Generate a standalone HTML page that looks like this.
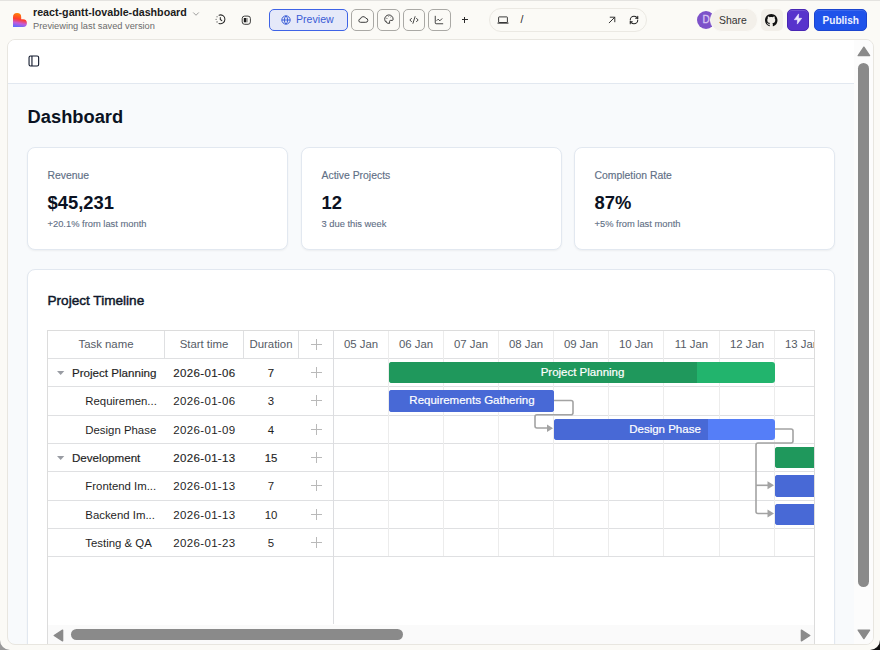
<!DOCTYPE html>
<html><head><meta charset="utf-8"><title>react-gantt-lovable-dashboard</title>
<style>
html,body{margin:0;padding:0;}
body{width:880px;height:650px;overflow:hidden;position:relative;background:#fbfaf6;font-family:"Liberation Sans", sans-serif;}
.t{position:absolute;white-space:nowrap;line-height:1;}
#panel{position:absolute;left:7px;top:39px;width:867px;height:606px;box-sizing:border-box;border:1px solid #e8e6e0;border-radius:8px;overflow:hidden;background:#f8fafc;}
</style></head><body>
<div style="position:absolute;left:0px;top:0px;width:880px;height:1px;background:#e4e3e0"></div><svg style="position:absolute;left:13px;top:13px" width="14" height="14" viewBox="0 0 14 14">
<defs><linearGradient id="lg" x1="0.55" y1="0" x2="0.35" y2="1">
<stop offset="0" stop-color="#ff8a00"/><stop offset="0.45" stop-color="#ff3d2e"/><stop offset="0.72" stop-color="#c65bd6"/><stop offset="1" stop-color="#5f6bff"/></linearGradient></defs>
<path d="M0 14V4.2a4.1 4.1 0 0 1 8.2 0V6.2H10a3.9 3.9 0 0 1 0 7.8Z" fill="url(#lg)"/></svg><div class="t" style="left:33.00px;top:6.74px;font-size:10.7px;color:#1c1c1c;font-weight:700;">react-gantt-lovable-dashboard</div><div class="t" style="left:33.00px;top:22.06px;font-size:9.26px;color:#6b6b6b;font-weight:400;">Previewing last saved version</div><svg style="position:absolute;left:191px;top:9px" width="10" height="10" viewBox="0 0 24 24" fill="none" stroke="#8a8a8a" stroke-width="2" stroke-linecap="round" stroke-linejoin="round"><path d="m6 9 6 6 6-6"/></svg><svg style="position:absolute;left:215px;top:14px" width="11" height="11" viewBox="0 0 11 11" fill="none" stroke="#2a2a2a" stroke-width="1.05" stroke-linecap="round">
<path d="M4.0 1.17A4.4 4.4 0 1 1 4.0 9.43"/>
<circle cx="2.05" cy="2.7" r="0.55" fill="#2a2a2a" stroke="none"/><circle cx="1.1" cy="5.3" r="0.55" fill="#2a2a2a" stroke="none"/><circle cx="2.05" cy="7.9" r="0.55" fill="#2a2a2a" stroke="none"/>
<path d="M5.3 3.4V5.4L6.8 6.7"/></svg><svg style="position:absolute;left:240.5px;top:14.5px" width="10" height="10" viewBox="0 0 10 10" fill="none" stroke="#2a2a2a" stroke-width="0.9">
<rect x="1.2" y="1.1" width="8.2" height="8.2" rx="2.4"/><rect x="2.8" y="3.0" width="2.5" height="4.3" fill="#1a1a1a" stroke="none"/><path d="M6.1 3.0V7.3" stroke-width="0.6"/></svg><div style="position:absolute;left:269px;top:9px;width:79px;height:22px;box-sizing:border-box;border:1.3px solid #3e63e6;border-radius:5px;background:#e5e9f9"></div><svg style="position:absolute;left:280.5px;top:14.5px" width="10" height="10" viewBox="0 0 24 24" fill="none" stroke="#3d5fd6" stroke-width="2.4"><circle cx="12" cy="12" r="10"/><path d="M12 2a14.5 14.5 0 0 0 0 20 14.5 14.5 0 0 0 0-20"/><path d="M2 12h20"/></svg><div class="t" style="left:296.00px;top:13.93px;font-size:10.6px;color:#3a5bd6;font-weight:400;">Preview</div><div style="position:absolute;left:351px;top:9px;width:22.5px;height:21.5px;box-sizing:border-box;border:1px solid #aaa9a5;border-radius:5px"></div><svg style="position:absolute;left:357.5px;top:15.2px" width="11" height="9" viewBox="0 0 11 9" fill="none" stroke="#333" stroke-width="0.95" stroke-linejoin="round"><path d="M2.6 7.3A1.7 1.7 0 0 1 2.45 3.9A2.9 2.9 0 0 1 7.9 3.3A2 2 0 0 1 7.7 7.3Z"/></svg><div style="position:absolute;left:377px;top:9px;width:22.5px;height:21.5px;box-sizing:border-box;border:1px solid #aaa9a5;border-radius:5px"></div><svg style="position:absolute;left:383.5px;top:14.3px" width="10" height="10" viewBox="0 0 10 10" fill="none" stroke="#333" stroke-width="0.95" stroke-linejoin="round"><path d="M9.1 5.2A4.2 4.2 0 1 0 5.6 9.3V7.3Q5.6 6.4 6.5 6.4H8.4Q9.1 6.4 9.1 5.2Z"/><circle cx="2.9" cy="4.2" r="0.55" fill="#333" stroke="none"/><circle cx="2.3" cy="7.3" r="0.55" fill="#333" stroke="none"/><circle cx="4.6" cy="2.5" r="0.5" fill="#888" stroke="none"/><circle cx="6.6" cy="2.9" r="0.5" fill="#888" stroke="none"/></svg><div style="position:absolute;left:402.5px;top:9px;width:22.5px;height:21.5px;box-sizing:border-box;border:1px solid #aaa9a5;border-radius:5px"></div><svg style="position:absolute;left:408.75px;top:14.75px;color:#333;" width="10" height="10" viewBox="0 0 24 24" fill="none" stroke="#333" stroke-width="2.2" stroke-linecap="round" stroke-linejoin="round"><path d="m18 16 4-4-4-4"/><path d="m6 8-4 4 4 4"/><path d="m14.5 4-5 16"/></svg><div style="position:absolute;left:428px;top:9px;width:22.5px;height:21.5px;box-sizing:border-box;border:1px solid #aaa9a5;border-radius:5px"></div><svg style="position:absolute;left:434.25px;top:14.75px;color:#333;" width="10" height="10" viewBox="0 0 24 24" fill="none" stroke="#333" stroke-width="2.2" stroke-linecap="round" stroke-linejoin="round"><path d="M3 3v16a2 2 0 0 0 2 2h16"/><path d="m19 9-5 5-4-4-3 3"/></svg><svg style="position:absolute;left:461px;top:16px" width="7" height="7" viewBox="0 0 7 7" stroke="#2a2a2a" stroke-width="1" shape-rendering="crispEdges"><path d="M0.5 3.5H6.5M3.5 0.5V6.5"/></svg><div style="position:absolute;left:489px;top:8px;width:158px;height:24px;box-sizing:border-box;border:1px solid #ebe9e3;border-radius:12px;background:#fbfaf6"></div><svg style="position:absolute;left:497px;top:16px" width="12" height="8" viewBox="0 0 12 8" fill="none" stroke="#333" stroke-width="0.95"><rect x="1.6" y="0.9" width="8.8" height="5.6" rx="0.5"/><path d="M0.5 7.1H11.5" stroke-width="1.1"/></svg><div class="t" style="left:520.50px;top:13.91px;font-size:10.5px;color:#222;font-weight:400;">/</div><svg style="position:absolute;left:607px;top:15px" width="10" height="10" viewBox="0 0 10 10" fill="none" stroke="#333" stroke-width="1" stroke-linecap="round" stroke-linejoin="round"><path d="M2.2 7.8L7.8 2.2M3.2 2.2H7.8V6.8"/></svg><svg style="position:absolute;left:628.9px;top:14.8px" width="10" height="10" viewBox="0 0 24 24" fill="none" stroke="#222" stroke-width="2.5" stroke-linecap="round" stroke-linejoin="round"><path d="M3 12a9 9 0 0 1 9-9 9.75 9.75 0 0 1 6.74 2.74L21 8"/><path d="M21 3v5h-5"/><path d="M21 12a9 9 0 0 1-9 9 9.75 9.75 0 0 1-6.74-2.74L3 16"/><path d="M8 16H3v5"/></svg><div style="position:absolute;left:697px;top:11px;width:18px;height:18px;border-radius:50%;background:#7d52c9"></div><div class="t" style="left:702.60px;top:15.23px;font-size:10px;color:#d8c6f3;font-weight:400;-webkit-text-stroke:0.3px #d8c6f3">D</div><div style="position:absolute;left:709.6px;top:7.7px;width:48.2px;height:24.6px;box-sizing:border-box;border:1.6px solid #fbfaf6;border-radius:13px;background:#f3f0ea"></div><div class="t" style="left:719.00px;top:16.00px;font-size:10.4px;color:#333;font-weight:400;">Share</div><div style="position:absolute;left:761px;top:9px;width:22px;height:22px;border-radius:5px;background:#f2efe9"></div><svg style="position:absolute;left:765px;top:14px" width="12.5" height="12.5" viewBox="0 0 16 16"><path fill="#111" d="M8 0C3.58 0 0 3.58 0 8c0 3.54 2.29 6.53 5.47 7.59.4.07.55-.17.55-.38 0-.19-.01-.82-.01-1.49-2.01.37-2.53-.49-2.69-.94-.09-.23-.48-.94-.82-1.13-.28-.15-.68-.52-.01-.53.63-.01 1.08.58 1.23.82.72 1.210 1.870.87 2.330.66.07-.52.28-.87.51-1.07-1.78-.2-3.640-.89-3.640-3.950 0-.87.31-1.59.82-2.15-.08-.2-.36-1.02.08-2.12 0 0 .67-.21 2.2.82.64-.18 1.32-.27 2-.27.68 0 1.36.09 2 .27 1.53-1.04 2.2-.82 2.2-.82.44 1.1.16 1.92.08 2.12.51.56.82 1.27.82 2.15 0 3.07-1.87 3.75-3.65 3.95.29.25.54.73.54 1.48 0 1.07-.01 1.93-.01 2.2 0 .21.15.46.55.38A8.013 8.013 0 0016 8c0-4.42-3.58-8-8-8z"/></svg><div style="position:absolute;left:787px;top:9px;width:22px;height:22px;box-sizing:border-box;border:1px solid #4826b4;border-radius:5px;background:#5733cc;box-shadow:inset 0 1px 0 rgba(255,255,255,0.15)"></div><svg style="position:absolute;left:792.8px;top:12.9px" width="10" height="12" viewBox="0 0 10 12"><path fill="#eeeaff" stroke="#eeeaff" stroke-width="0.6" stroke-linejoin="round" d="M5.6 0.9L1.3 6.7H4.5L4.3 11.1L8.7 5.3H5.5Z"/></svg><div style="position:absolute;left:814px;top:9px;width:53px;height:22px;box-sizing:border-box;border:1px solid #1b45cf;border-radius:5px;background:#1f53ea;box-shadow:inset 0 1px 0 rgba(255,255,255,0.12)"></div><div class="t" style="left:822.50px;top:15.75px;font-size:10.1px;color:#eef1ff;font-weight:700;">Publish</div>
<div id="panel"><div style="position:absolute;left:0px;top:0px;width:846px;height:43px;background:#fff"></div><div style="position:absolute;left:0px;top:43px;width:846px;height:1px;background:#e2e8f0"></div><svg style="position:absolute;left:19.7px;top:15.4px" width="12" height="12" viewBox="0 0 12 12" fill="none" stroke="#0f172a" stroke-width="1.1"><rect x="1.05" y="1.05" width="9.6" height="10" rx="1.5"/><path d="M3.95 1V11"/></svg><div class="t" style="left:19.60px;top:67.81px;font-size:18.3px;color:#0b1222;font-weight:700;">Dashboard</div><div style="position:absolute;left:19px;top:107px;width:261px;height:103px;box-sizing:border-box;background:#fff;border:1px solid #e2e8f0;border-radius:8px;box-shadow:0 1px 2px rgba(0,0,0,0.05)"></div><div class="t" style="left:39.50px;top:130.80px;font-size:10.4px;color:#5f6f86;font-weight:400;-webkit-text-stroke:0.15px #5f6f86">Revenue</div><div class="t" style="left:39.50px;top:153.82px;font-size:18.4px;color:#0b1222;font-weight:700;">$45,231</div><div class="t" style="left:39.50px;top:179.99px;font-size:9.35px;color:#5f6f86;font-weight:400;-webkit-text-stroke:0.12px #5f6f86">+20.1% from last month</div><div style="position:absolute;left:293px;top:107px;width:261px;height:103px;box-sizing:border-box;background:#fff;border:1px solid #e2e8f0;border-radius:8px;box-shadow:0 1px 2px rgba(0,0,0,0.05)"></div><div class="t" style="left:313.50px;top:130.80px;font-size:10.4px;color:#5f6f86;font-weight:400;-webkit-text-stroke:0.15px #5f6f86">Active Projects</div><div class="t" style="left:313.50px;top:153.82px;font-size:18.4px;color:#0b1222;font-weight:700;">12</div><div class="t" style="left:313.50px;top:179.99px;font-size:9.35px;color:#5f6f86;font-weight:400;-webkit-text-stroke:0.12px #5f6f86">3 due this week</div><div style="position:absolute;left:566px;top:107px;width:261px;height:103px;box-sizing:border-box;background:#fff;border:1px solid #e2e8f0;border-radius:8px;box-shadow:0 1px 2px rgba(0,0,0,0.05)"></div><div class="t" style="left:586.50px;top:130.80px;font-size:10.4px;color:#5f6f86;font-weight:400;-webkit-text-stroke:0.15px #5f6f86">Completion Rate</div><div class="t" style="left:586.50px;top:153.82px;font-size:18.4px;color:#0b1222;font-weight:700;">87%</div><div class="t" style="left:586.50px;top:179.99px;font-size:9.35px;color:#5f6f86;font-weight:400;-webkit-text-stroke:0.12px #5f6f86">+5% from last month</div><div style="position:absolute;left:19px;top:229px;width:808px;height:420px;box-sizing:border-box;background:#fff;border:1px solid #e2e8f0;border-radius:8px;box-shadow:0 1px 2px rgba(0,0,0,0.05)"></div><div class="t" style="left:39.50px;top:254.09px;font-size:13.6px;color:#0f172a;font-weight:400;-webkit-text-stroke:0.45px #0f172a">Project Timeline</div><div style="position:absolute;left:39px;top:290px;width:768px;height:400px;box-sizing:border-box;border:1px solid #dcdcdc;border-bottom:none"></div><div style="position:absolute;left:40px;top:318px;width:766px;height:1px;background:#dfe0e2"></div><div style="position:absolute;left:40px;top:346px;width:766px;height:1px;background:#dfe0e2"></div><div style="position:absolute;left:40px;top:375px;width:766px;height:1px;background:#dfe0e2"></div><div style="position:absolute;left:40px;top:403px;width:766px;height:1px;background:#dfe0e2"></div><div style="position:absolute;left:40px;top:431px;width:766px;height:1px;background:#dfe0e2"></div><div style="position:absolute;left:40px;top:460px;width:766px;height:1px;background:#dfe0e2"></div><div style="position:absolute;left:40px;top:488px;width:766px;height:1px;background:#dfe0e2"></div><div style="position:absolute;left:40px;top:516px;width:766px;height:1px;background:#dfe0e2"></div><div style="position:absolute;left:156px;top:291px;width:1px;height:27px;background:#dfe0e2"></div><div style="position:absolute;left:235px;top:291px;width:1px;height:27px;background:#dfe0e2"></div><div style="position:absolute;left:290px;top:291px;width:1px;height:27px;background:#dfe0e2"></div><div style="position:absolute;left:325px;top:291px;width:1px;height:293px;background:#dcdde0"></div><div style="position:absolute;left:380px;top:291px;width:1px;height:225px;background:#ececec"></div><div style="position:absolute;left:435px;top:291px;width:1px;height:225px;background:#ececec"></div><div style="position:absolute;left:490px;top:291px;width:1px;height:225px;background:#ececec"></div><div style="position:absolute;left:545px;top:291px;width:1px;height:225px;background:#ececec"></div><div style="position:absolute;left:600px;top:291px;width:1px;height:225px;background:#ececec"></div><div style="position:absolute;left:655px;top:291px;width:1px;height:225px;background:#ececec"></div><div style="position:absolute;left:711px;top:291px;width:1px;height:225px;background:#ececec"></div><div style="position:absolute;left:766px;top:291px;width:1px;height:225px;background:#ececec"></div><div class="t" style="left:40.00px;width:116px;text-align:center;top:299.45px;font-size:11.4px;color:#555b66;font-weight:400;">Task name</div><div class="t" style="left:157.00px;width:78px;text-align:center;top:299.45px;font-size:11.4px;color:#555b66;font-weight:400;">Start time</div><div class="t" style="left:233.00px;width:60px;text-align:center;top:299.45px;font-size:11.4px;color:#555b66;font-weight:400;">Duration</div><svg style="position:absolute;left:302.75px;top:299.25px" width="11" height="11" viewBox="0 0 11 11" stroke="#b9b9b9" stroke-width="1"><path d="M0 5.5H11M5.5 0V11"/></svg><svg style="position:absolute;left:48.80px;top:330.80px" width="8" height="5" viewBox="0 0 8 5"><path d="M0 0H7.3L3.65 4.1Z" fill="#999ca3"/></svg><div class="t" style="left:64.00px;top:327.38px;font-size:11.6px;color:#1f1f1f;font-weight:400;-webkit-text-stroke:0.18px #1f1f1f">Project Planning</div><div class="t" style="left:157.40px;width:78px;text-align:center;top:328.27px;font-size:11.5px;color:#1f1f1f;font-weight:400;-webkit-text-stroke:0.15px #1f1f1f;letter-spacing:0.35px">2026-01-06</div><div class="t" style="left:236.00px;width:54px;text-align:center;top:328.35px;font-size:11.4px;color:#1f1f1f;font-weight:400;-webkit-text-stroke:0.15px #1f1f1f;">7</div><svg style="position:absolute;left:302.75px;top:326.75px" width="11" height="11" viewBox="0 0 11 11" stroke="#b9b9b9" stroke-width="1"><path d="M0 5.5H11M5.5 0V11"/></svg><div class="t" style="left:77.30px;top:356.35px;font-size:11.4px;color:#1f1f1f;font-weight:400;">Requiremen...</div><div class="t" style="left:157.40px;width:78px;text-align:center;top:356.27px;font-size:11.5px;color:#1f1f1f;font-weight:400;letter-spacing:0.35px">2026-01-06</div><div class="t" style="left:236.00px;width:54px;text-align:center;top:356.35px;font-size:11.4px;color:#1f1f1f;font-weight:400;">3</div><svg style="position:absolute;left:302.75px;top:354.75px" width="11" height="11" viewBox="0 0 11 11" stroke="#b9b9b9" stroke-width="1"><path d="M0 5.5H11M5.5 0V11"/></svg><div class="t" style="left:77.30px;top:385.35px;font-size:11.4px;color:#1f1f1f;font-weight:400;">Design Phase</div><div class="t" style="left:157.40px;width:78px;text-align:center;top:385.27px;font-size:11.5px;color:#1f1f1f;font-weight:400;letter-spacing:0.35px">2026-01-09</div><div class="t" style="left:236.00px;width:54px;text-align:center;top:385.35px;font-size:11.4px;color:#1f1f1f;font-weight:400;">4</div><svg style="position:absolute;left:302.75px;top:383.75px" width="11" height="11" viewBox="0 0 11 11" stroke="#b9b9b9" stroke-width="1"><path d="M0 5.5H11M5.5 0V11"/></svg><svg style="position:absolute;left:48.80px;top:415.80px" width="8" height="5" viewBox="0 0 8 5"><path d="M0 0H7.3L3.65 4.1Z" fill="#999ca3"/></svg><div class="t" style="left:64.00px;top:412.38px;font-size:11.6px;color:#1f1f1f;font-weight:400;-webkit-text-stroke:0.18px #1f1f1f">Development</div><div class="t" style="left:157.40px;width:78px;text-align:center;top:413.27px;font-size:11.5px;color:#1f1f1f;font-weight:400;-webkit-text-stroke:0.15px #1f1f1f;letter-spacing:0.35px">2026-01-13</div><div class="t" style="left:236.00px;width:54px;text-align:center;top:413.35px;font-size:11.4px;color:#1f1f1f;font-weight:400;-webkit-text-stroke:0.15px #1f1f1f;">15</div><svg style="position:absolute;left:302.75px;top:411.75px" width="11" height="11" viewBox="0 0 11 11" stroke="#b9b9b9" stroke-width="1"><path d="M0 5.5H11M5.5 0V11"/></svg><div class="t" style="left:77.30px;top:441.35px;font-size:11.4px;color:#1f1f1f;font-weight:400;">Frontend Im...</div><div class="t" style="left:157.40px;width:78px;text-align:center;top:441.27px;font-size:11.5px;color:#1f1f1f;font-weight:400;letter-spacing:0.35px">2026-01-13</div><div class="t" style="left:236.00px;width:54px;text-align:center;top:441.35px;font-size:11.4px;color:#1f1f1f;font-weight:400;">7</div><svg style="position:absolute;left:302.75px;top:439.75px" width="11" height="11" viewBox="0 0 11 11" stroke="#b9b9b9" stroke-width="1"><path d="M0 5.5H11M5.5 0V11"/></svg><div class="t" style="left:77.30px;top:470.35px;font-size:11.4px;color:#1f1f1f;font-weight:400;">Backend Im...</div><div class="t" style="left:157.40px;width:78px;text-align:center;top:470.27px;font-size:11.5px;color:#1f1f1f;font-weight:400;letter-spacing:0.35px">2026-01-13</div><div class="t" style="left:236.00px;width:54px;text-align:center;top:470.35px;font-size:11.4px;color:#1f1f1f;font-weight:400;">10</div><svg style="position:absolute;left:302.75px;top:468.75px" width="11" height="11" viewBox="0 0 11 11" stroke="#b9b9b9" stroke-width="1"><path d="M0 5.5H11M5.5 0V11"/></svg><div class="t" style="left:77.30px;top:498.35px;font-size:11.4px;color:#1f1f1f;font-weight:400;">Testing &amp; QA</div><div class="t" style="left:157.40px;width:78px;text-align:center;top:498.27px;font-size:11.5px;color:#1f1f1f;font-weight:400;letter-spacing:0.35px">2026-01-23</div><div class="t" style="left:236.00px;width:54px;text-align:center;top:498.35px;font-size:11.4px;color:#1f1f1f;font-weight:400;">5</div><svg style="position:absolute;left:302.75px;top:496.75px" width="11" height="11" viewBox="0 0 11 11" stroke="#b9b9b9" stroke-width="1"><path d="M0 5.5H11M5.5 0V11"/></svg><div style="position:absolute;left:326px;top:291px;width:480px;height:293px;overflow:hidden"><div class="t" style="left:-0.50px;width:55px;text-align:center;top:8.45px;font-size:11.4px;color:#555b66;font-weight:400;">05 Jan</div><div class="t" style="left:54.50px;width:55px;text-align:center;top:8.45px;font-size:11.4px;color:#555b66;font-weight:400;">06 Jan</div><div class="t" style="left:109.50px;width:55px;text-align:center;top:8.45px;font-size:11.4px;color:#555b66;font-weight:400;">07 Jan</div><div class="t" style="left:164.50px;width:55px;text-align:center;top:8.45px;font-size:11.4px;color:#555b66;font-weight:400;">08 Jan</div><div class="t" style="left:219.50px;width:55px;text-align:center;top:8.45px;font-size:11.4px;color:#555b66;font-weight:400;">09 Jan</div><div class="t" style="left:274.50px;width:55px;text-align:center;top:8.45px;font-size:11.4px;color:#555b66;font-weight:400;">10 Jan</div><div class="t" style="left:330.00px;width:55px;text-align:center;top:8.45px;font-size:11.4px;color:#555b66;font-weight:400;">11 Jan</div><div class="t" style="left:385.50px;width:55px;text-align:center;top:8.45px;font-size:11.4px;color:#555b66;font-weight:400;">12 Jan</div><div class="t" style="left:440.50px;width:55px;text-align:center;top:8.45px;font-size:11.4px;color:#555b66;font-weight:400;">13 Jan</div><div style="position:absolute;left:55px;top:31px;width:386px;height:21px;border-radius:3px;background:#22b46d;overflow:hidden"><div style="position:absolute;left:0;top:0;width:308px;height:21px;background:#1f985c"></div></div><div class="t" style="left:55.50px;width:386px;text-align:center;top:35.87px;font-size:11.5px;color:#ffffff;font-weight:400;-webkit-text-stroke:0.2px #ffffff">Project Planning</div><div style="position:absolute;left:55px;top:59px;width:165px;height:22px;border-radius:3px;background:#4869d6;overflow:hidden"><div style="position:absolute;left:0;top:0;width:165px;height:22px;background:#4869d6"></div></div><div class="t" style="left:55.50px;width:165px;text-align:center;top:63.87px;font-size:11.5px;color:#ffffff;font-weight:400;-webkit-text-stroke:0.2px #ffffff">Requirements Gathering</div><div style="position:absolute;left:220px;top:88px;width:221px;height:21px;border-radius:3px;background:#557ef8;overflow:hidden"><div style="position:absolute;left:0;top:0;width:154px;height:21px;background:#4869d6"></div></div><div class="t" style="left:220.50px;width:221px;text-align:center;top:92.87px;font-size:11.5px;color:#ffffff;font-weight:400;-webkit-text-stroke:0.2px #ffffff">Design Phase</div><div style="position:absolute;left:441px;top:116px;width:55px;height:21px;border-radius:3px;background:#1f985c;overflow:hidden"><div style="position:absolute;left:0;top:0;width:55px;height:21px;background:#1f985c"></div></div><div style="position:absolute;left:441px;top:144px;width:55px;height:22px;border-radius:3px;background:#4869d6;overflow:hidden"><div style="position:absolute;left:0;top:0;width:55px;height:22px;background:#4869d6"></div></div><div style="position:absolute;left:441px;top:173px;width:55px;height:21px;border-radius:3px;background:#4869d6;overflow:hidden"><div style="position:absolute;left:0;top:0;width:55px;height:21px;background:#4869d6"></div></div><svg style="position:absolute;left:0;top:0" width="481" height="300" viewBox="334 331 481 300" fill="none" stroke="#a3a3a3" stroke-width="1.6" stroke-linejoin="round"><path d="M554 400.5H571a2 2 0 0 1 2 2V412.8a2 2 0 0 1-2 2H537a2 2 0 0 0-2 2V426a2 2 0 0 0 2 2H548"/><path d="M547 424.5L553 428.2L547 432Z" fill="#a3a3a3" stroke="none"/><path d="M775 429H791a2 2 0 0 1 2 2V441a2 2 0 0 1-2 2H758a2 2 0 0 0-2 2V511.5a2 2 0 0 0 2 2H769"/><path d="M756 485.3H769"/><path d="M767.5 481.3L774 485.3L767.5 489.3Z" fill="#a3a3a3" stroke="none"/><path d="M767.5 509.5L774 513.5L767.5 517.5Z" fill="#a3a3a3" stroke="none"/></svg></div><div style="position:absolute;left:40px;top:584.5px;width:766px;height:20px;background:#fafafa"></div><svg style="position:absolute;left:45.00px;top:588.50px" width="11" height="13" viewBox="0 0 11 13"><path d="M9.6 1.2V11.8L1.2 6.5Z" fill="#8a8a8a" stroke="#8a8a8a" stroke-width="1.4" stroke-linejoin="round"/></svg><div style="position:absolute;left:63px;top:589px;width:332px;height:11px;background:#8a8a8a;border-radius:5.5px"></div><svg style="position:absolute;left:791.50px;top:588.50px" width="11" height="13" viewBox="0 0 11 13"><path d="M1.4 1.2V11.8L9.8 6.5Z" fill="#8a8a8a" stroke="#8a8a8a" stroke-width="1.4" stroke-linejoin="round"/></svg><div style="position:absolute;left:846px;top:0px;width:19px;height:605px;background:#fcfcfc"></div><svg style="position:absolute;left:848.50px;top:5.50px" width="14" height="11" viewBox="0 0 14 11"><path d="M1.2 9.6H12.6L6.9 1.2Z" fill="#8a8a8a" stroke="#8a8a8a" stroke-width="1.4" stroke-linejoin="round"/></svg><div style="position:absolute;left:850px;top:23px;width:11px;height:524px;background:#8a8a8a;border-radius:5.5px"></div><svg style="position:absolute;left:848.50px;top:588.50px" width="14" height="11" viewBox="0 0 14 11"><path d="M1.2 1.2H12.6L6.9 9.6Z" fill="#8a8a8a" stroke="#8a8a8a" stroke-width="1.4" stroke-linejoin="round"/></svg></div>
<svg style="position:absolute;left:0;top:0" width="880" height="650"><path d="M0 640A10 10 0 0 0 10 650H0Z" fill="#9a9a9a"/><path d="M880 640A10 10 0 0 1 870 650H880Z" fill="#111"/></svg>
</body></html>
